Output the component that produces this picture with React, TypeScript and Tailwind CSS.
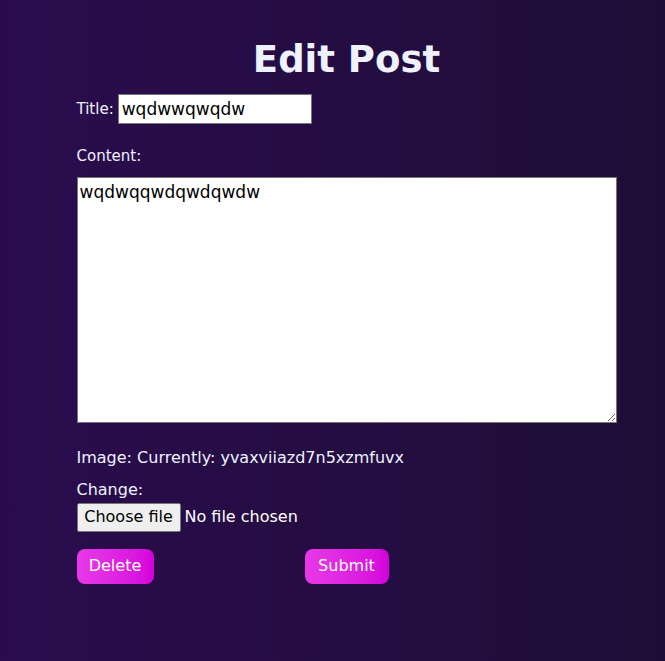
import React from "react";

export default function App() {
  return (
    <div
      className="min-h-[661px] w-full bg-gradient-to-r from-[#2a0c4e] to-[#1f0d37] pl-[28px] text-[#eef2ff]"
      style={{ fontFamily: '"DejaVu Sans", sans-serif' }}
    >
      <div className="mx-auto w-[540px] pt-[36px]">
        <h1 className="text-center text-[37px] font-bold leading-[48px] tracking-[0px] text-[#eef2ff]">
          Edit Post
        </h1>
        <form className="flex flex-col text-[16px]">
          <div className="mt-[10px] flex items-center gap-[4px]">
            <label className="text-[15px]">Title:</label>
            <input
              defaultValue="wqdwwqwqdw"
              className="h-[30px] w-[194px] border border-[#767676] bg-white px-[3px] text-[17px] text-black"
            />
          </div>
          <label className="mt-[21px] text-[15px]">Content:</label>
          <textarea
            defaultValue="wqdwqqwdqwdqwdw"
            className="mt-[9px] h-[246px] w-[540px] resize border border-[#767676] bg-white px-[2px] py-[3px] text-[17px] leading-[22px] text-black"
          />
          <div className="mt-[23px]">Image: Currently: yvaxviiazd7n5xzmfuvx</div>
          <label className="mt-[8px]">Change:</label>
          <label className="mt-[1px] flex items-center gap-[4px]">
            <span className="flex h-[29px] w-[104px] items-center justify-center rounded-[2px] border border-[#767676] bg-[#efefef] text-black">
              Choose file
            </span>
            <span className="text-white">No file chosen</span>
            <input type="file" className="hidden" />
          </label>
          <div className="mt-[17px] flex items-center">
            <button
              type="button"
              className="h-[35px] w-[77px] rounded-[8px] bg-gradient-to-r from-[#e838e8] to-[#d500dc] text-[16px] text-white"
            >
              Delete
            </button>
            <button
              type="button"
              className="ml-[151px] h-[35px] w-[84px] rounded-[8px] bg-gradient-to-r from-[#e838e8] to-[#d500dc] text-[16px] text-white"
            >
              Submit
            </button>
          </div>
        </form>
      </div>
    </div>
  );
}
